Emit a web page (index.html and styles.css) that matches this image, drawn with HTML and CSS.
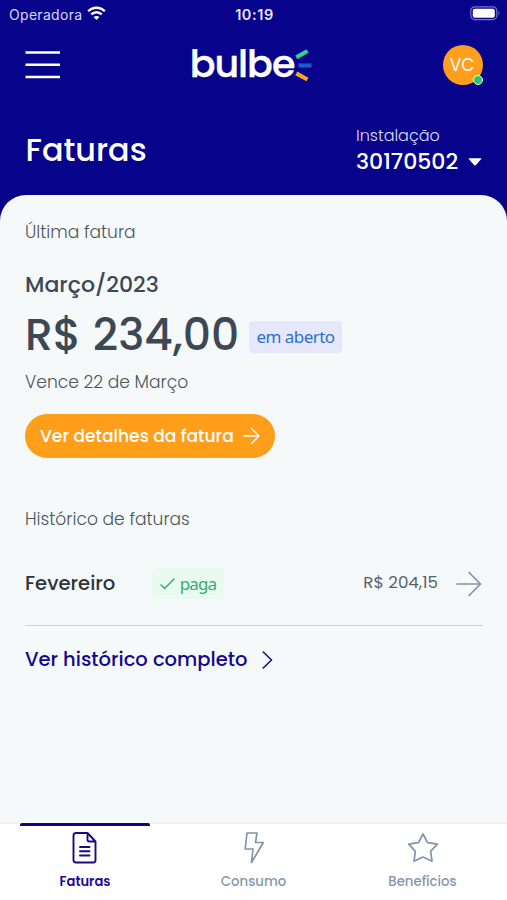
FILE: index.html
```
<!DOCTYPE html>
<html lang="pt-BR">
<head>
<meta charset="utf-8">
<title>Bulbe – Faturas</title>
<link rel="stylesheet" href="styles.css">
</head>
<body>
<div class="app">
  <header class="header">
    <div class="status">
      <div class="carrier"><span>Operadora</span>
        <svg width="19" height="15" viewBox="0 0 19 15" fill="none" stroke="#fff" stroke-width="2.3"><path d="M1.2 5.2C5.8.6 13.2.6 17.8 5.2M4.3 8.4c2.9-2.9 7.5-2.9 10.4 0"/><path d="M9.5 14 6.6 11.1c1.6-1.6 4.2-1.6 5.8 0z" fill="#fff" stroke="none"/></svg>
      </div>
      <span class="time">10:19</span>
      <svg class="battery" width="31" height="15" viewBox="0 0 31 15"><rect x=".8" y=".8" width="26" height="12.8" rx="4" fill="none" stroke="#7774c9" stroke-width="1.2"/><rect x="2.8" y="2.7" width="22" height="9" rx="2" fill="#fff"/><path d="M28.4 5q2 2.2 0 4.400z" fill="#7774c9"/></svg>
    </div>
    <div class="topbar">
      <svg width="36" height="30" viewBox="0 0 36 30" stroke="#fff" stroke-width="2.6"><path d="M.5 2.500H35M.5 14.700H35M.5 27H35"/></svg>
      <div class="logo"><span>bulbe</span>
        <svg width="18" height="34" viewBox="0 0 18 34" fill="none" stroke-width="4.200"><path d="M2.300 9.300 13.500 3" stroke="#2fd38a"/><path d="M4.500 17.500H17.500" stroke="#1560c8"/><path d="M2.300 25.300 13.500 31.500" stroke="#ffa02c"/></svg>
      </div>
      <div class="avatar">VC<i></i></div>
    </div>
    <div class="titlebar">
      <h1>Faturas</h1>
      <div class="install"><span class="install-label">Instalação</span>
        <span class="install-no"><b>30170502</b><svg width="14" height="8" viewBox="0 0 14 8"><path d="M1 .3h12q.8 0 .2.800L8 7q-1 .9-2 0L.8 1.100Q.2.300 1 .3z" fill="#fff"/></svg></span>
      </div>
    </div>
  </header>
  <main class="panel">
    <p class="caption">Última fatura</p>
    <h2 class="month">Março/2023</h2>
    <div class="amount"><strong>R$ 234,00</strong><span class="tag open">em aberto</span></div>
    <p class="caption due">Vence 22 de Março</p>
    <button class="details">Ver detalhes da fatura
      <svg width="17" height="18" viewBox="0 0 17 18" fill="none" stroke="#fff" stroke-width="1.300" stroke-linecap="round" stroke-linejoin="round"><path d="M.8 9H16M8.500 1.500 16 9 8.500 16.500"/></svg>
    </button>
    <p class="caption history">Histórico de faturas</p>
    <div class="item">
      <span class="name">Fevereiro</span>
      <span class="tag paid"><svg width="15" height="12" viewBox="0 0 15 12" fill="none" stroke="#35ad72" stroke-width="1.500" stroke-linecap="round" stroke-linejoin="round"><path d="M1 7l3.600 3.500L14 1"/></svg>paga</span>
      <span class="price">R$ 204,15</span>
      <svg class="go" width="26" height="26" viewBox="0 0 26 26" fill="none" stroke="#8292ae" stroke-width="1.700" stroke-linecap="round" stroke-linejoin="round"><path d="M1 13H24.500M13 1.500 24.500 13 13 24.500"/></svg>
    </div>
    <a class="all">Ver histórico completo
      <svg width="11" height="18" viewBox="0 0 11 18" fill="none" stroke="#1b0a98" stroke-width="1.600" stroke-linecap="round" stroke-linejoin="round"><path d="M1.200 1 9.500 9 1.200 17"/></svg>
    </a>
  </main>
  <nav class="tabs">
    <div class="tab active">
      <svg width="26" height="32" viewBox="0 0 26 32" fill="none" stroke="#1b0a86" stroke-width="1.900" stroke-linecap="round" stroke-linejoin="round"><path d="M15.500 1H4Q1.500 1 1.500 3.500V28Q1.500 30.500 4 30.500H21.500Q23.500 30.500 23.500 28V9.500zM15.500 1V7.500Q15.500 9.500 17.500 9.500H23.500M8 15H17.500M8 19.300H17.500M8 23.500H17.500"/></svg>
      <span>Faturas</span>
    </div>
    <div class="tab">
      <svg width="22" height="32" viewBox="0 0 22 32" fill="none" stroke="#8494ac" stroke-width="1.700" stroke-linejoin="round"><path d="M4 1H14L12.500 10.500H20.300L8.500 30.500 10 17H2.200Z"/></svg>
      <span>Consumo</span>
    </div>
    <div class="tab">
      <svg width="32" height="32" viewBox="0 0 32 32" fill="none" stroke="#8494ac" stroke-width="1.700" stroke-linejoin="round"><path d="M16 2 20.200 10Q20.500 10.500 21 10.600L30.300 12.200 24 18.900Q23.600 19.300 23.700 19.900L25 29.200 16.600 25.200Q16 24.900 15.400 25.200L7 29.200 8.300 19.900Q8.400 19.300 8 18.900L1.700 12.200 11 10.600Q11.500 10.500 11.800 10Z"/></svg>
      <span>Benefícios</span>
    </div>
  </nav>
</div>
</body>
</html>
```
FILE: styles.css
```
* { box-sizing: border-box; margin: 0; padding: 0; }
body { font-family: Poppins, Inter, sans-serif; color: #3d4855; background: #08038b; }
svg { display: block; flex: none; }
.app { width: 507px; height: 900px; display: flex; flex-direction: column; white-space: nowrap; }
.header { height: 195px; flex: none; color: #fff; }

.status { height: 28px; display: grid; grid-template-columns: 1fr auto 1fr; align-items: center; padding: 0 6px 0 9px; font-family: Inter, sans-serif; font-size: 14px; }
.carrier { display: flex; align-items: center; gap: 5px; letter-spacing: .3px; color: #d9d8f3; }
.carrier svg { margin-top: -2px; }
.time { font-size: 14.5px; font-weight: 600; letter-spacing: .6px; color: #e6e5fa; margin-right: 1px; }
.battery { justify-self: end; margin-top: -1px; }

.topbar { height: 74px; display: grid; grid-template-columns: 1fr auto 1fr; align-items: center; padding: 0 24px 0 25px; }
.topbar > svg { margin-top: -1px; }
.logo { display: flex; align-items: center; font-size: 38px; font-weight: 500; line-height: 34px; letter-spacing: -1px; margin: -1px 6px 0 0; }
.logo span { margin-top: -2px; -webkit-text-stroke: .4px #fff; }
.avatar { position: relative; justify-self: end; width: 40px; height: 40px; border-radius: 50%; background: #ff9f1d; display: flex; align-items: center; justify-content: center; font-size: 17px; padding-right: 2px; margin-top: -1px; }
.avatar i { position: absolute; right: 0; bottom: 0; width: 10px; height: 10px; border-radius: 50%; background: #1fca76; border: 1.5px solid #e8fff4; }

.titlebar { display: flex; justify-content: space-between; align-items: center; height: 93px; padding: 0 24px 0 25.5px; }
h1 { font-size: 31.8px; font-weight: 500; line-height: 40px; margin-top: 3px; }
.install { width: 127px; display: flex; flex-direction: column; }
.install-label { font-size: 16px; font-weight: 300; line-height: 26px; color: #dfddfa; }
.install-no { display: flex; align-items: center; justify-content: space-between; height: 26px; padding-right: 1px; }
.install-no b { font-size: 22px; font-weight: 500; line-height: 26px; }

.panel { flex: 1; background: #f6f9f9; border-radius: 26px 26px 0 0; padding: 27px 24px 0 25px; }
.caption { font-size: 17.1px; font-weight: 300; line-height: 20px; color: #4b555e; }
.month { margin-top: 28px; font-size: 22px; font-weight: 500; line-height: 29px; }
.amount { display: flex; align-items: center; margin-top: 11px; height: 49px; }
.amount strong { width: 224px; font-size: 44px; font-weight: 500; line-height: 49px; }
.tag { display: flex; align-items: center; justify-content: center; font-family: "Noto Sans", sans-serif; font-size: 17px; line-height: 20px; border-radius: 4px; height: 32px; }
.open { width: 93px; background: #e7e7fc; color: #2a71cf; letter-spacing: -.55px; margin-top: 5px; }
.due { margin-top: 13px; }
.details { width: 250px; height: 44px; margin-top: 22px; padding: 0 15px; border: 0; border-radius: 22px; background: #ff9e1b; color: #fff; font: 500 17.1px Poppins, Inter, sans-serif; display: flex; align-items: center; justify-content: space-between; }
.history { margin-top: 51px; }
.item { display: flex; align-items: center; height: 97px; padding-top: 13px; border-bottom: 1px solid #cbd5da; }
.name { width: 127px; font-size: 19.6px; font-weight: 500; color: #2f353b; padding-bottom: 2px; }
.paid { width: 72px; height: 31px; gap: 5px; background: #e9faf1; color: #35ad72; letter-spacing: -.9px; }
.price { margin-left: auto; font-size: 16.7px; color: #59626a; padding-bottom: 4px; }
.go { margin: 0 1px 0 18px; }
.all { display: flex; align-items: center; gap: 15px; margin-top: 19px; height: 29px; font-size: 19.5px; font-weight: 500; color: #14068e; }

.tabs { height: 77px; flex: none; display: grid; grid-template-columns: 169px 169px 169px; background: #fff; border-top: 1px solid #edf0f1; }
.tab { display: flex; flex-direction: column; align-items: center; padding-top: 8px; font-size: 13.3px; font-weight: 500; color: #8796ad; }
.tab span { margin-top: 10px; line-height: 16px; }
.active { width: 130px; margin: -1px 0 0 20px; padding-top: 9px; color: #1b0a98; background: linear-gradient(#12067f, #12067f) top / 100% 3px no-repeat; border-radius: 2px; }
.active span { font-size: 13.1px; font-weight: 600; }
```
